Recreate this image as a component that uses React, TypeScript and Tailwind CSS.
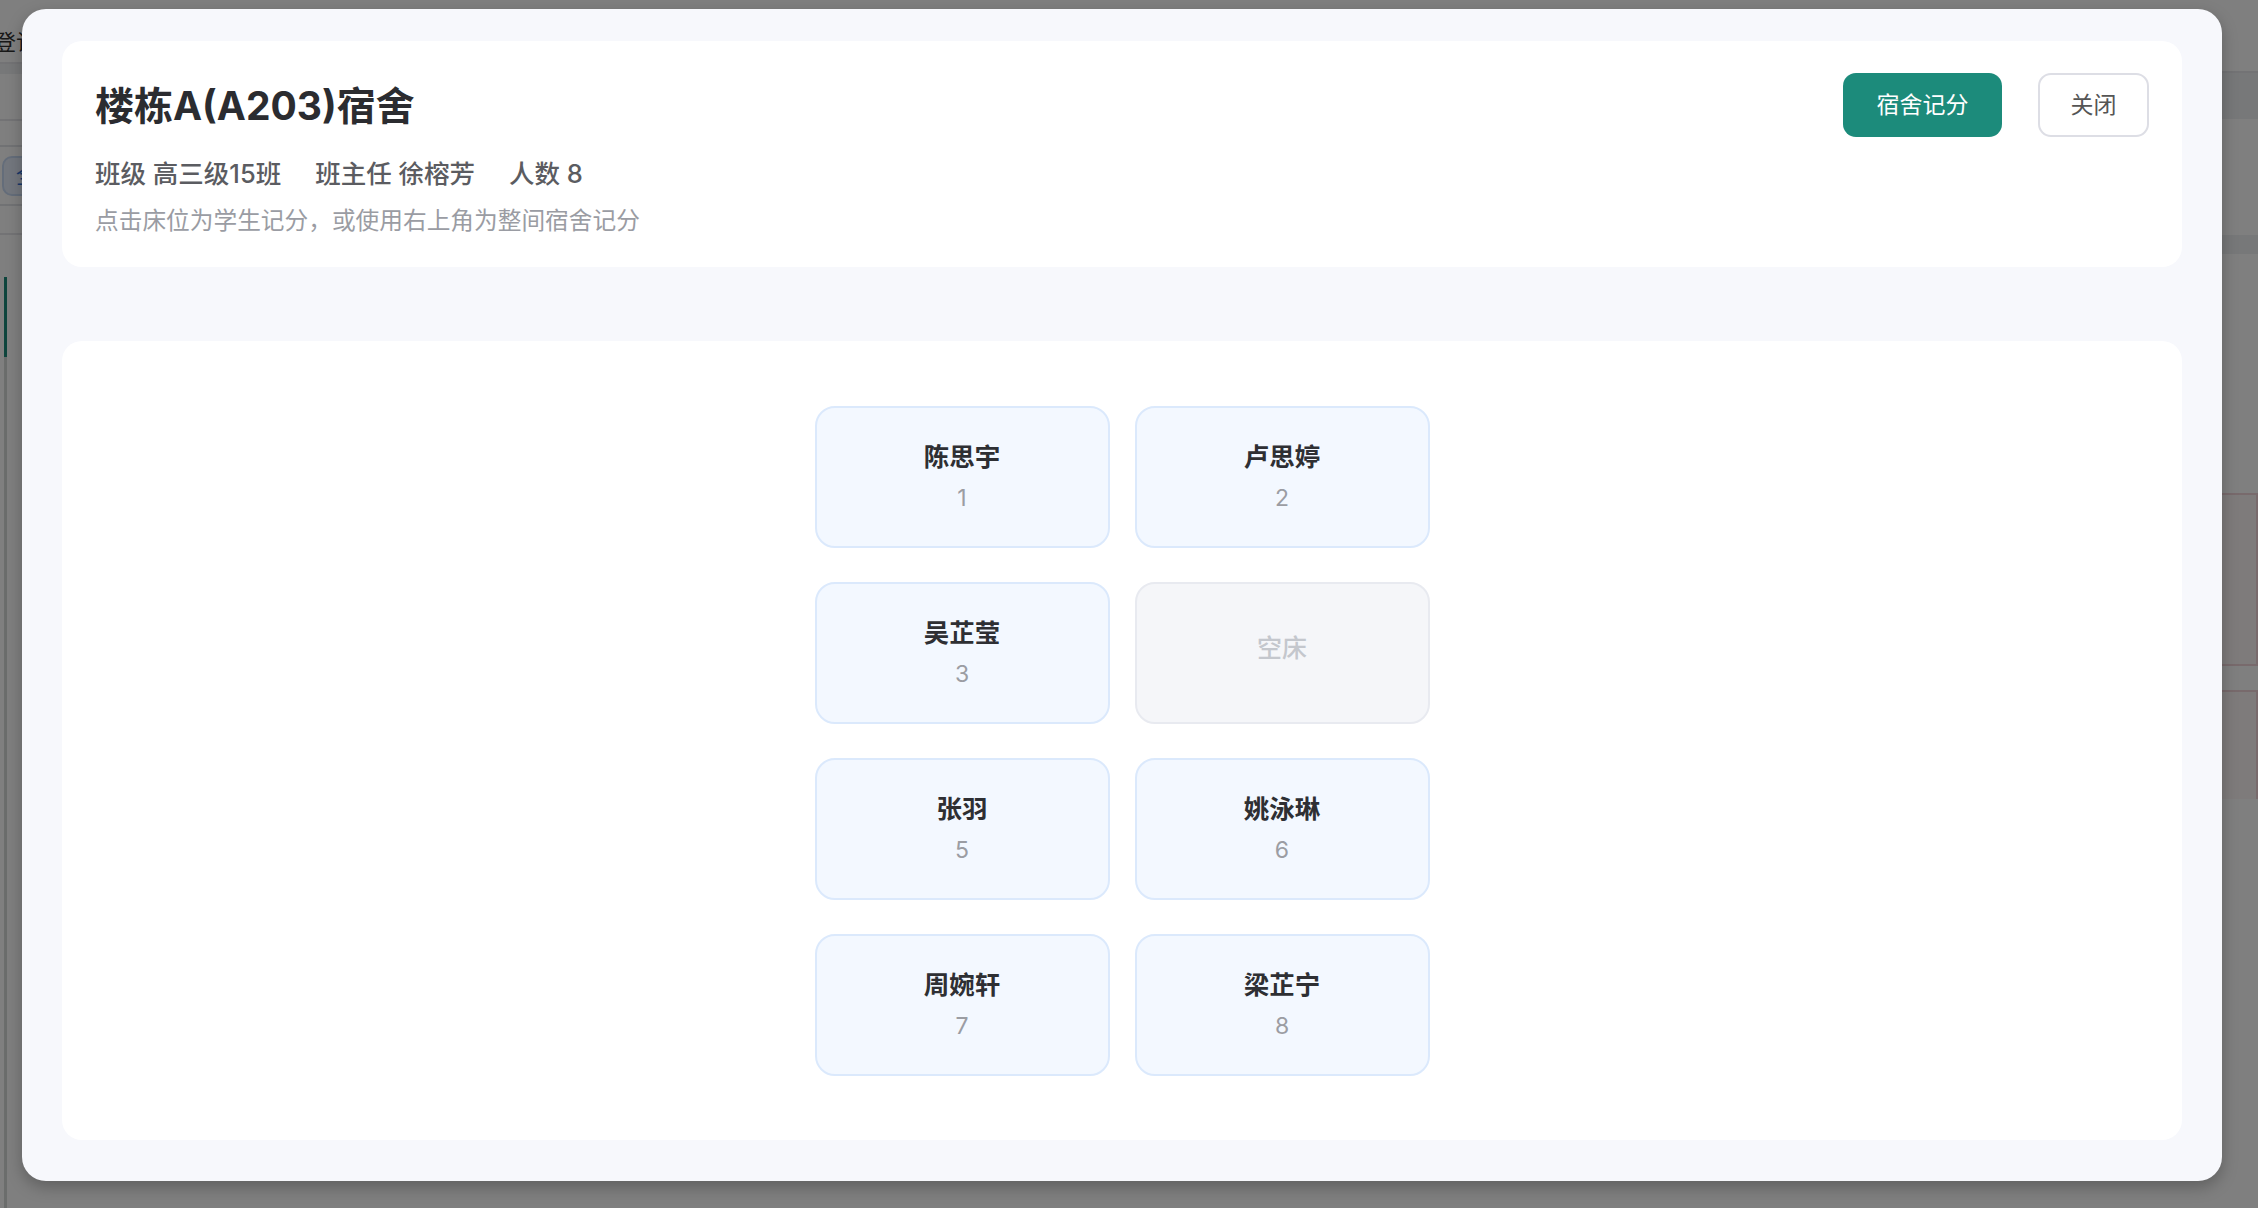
import React from "react";

type Bed = { name?: string; no: number };

const beds: Bed[] = [
  { name: "陈思宇", no: 1 },
  { name: "卢思婷", no: 2 },
  { name: "吴芷莹", no: 3 },
  { no: 4 },
  { name: "张羽", no: 5 },
  { name: "姚泳琳", no: 6 },
  { name: "周婉轩", no: 7 },
  { name: "梁芷宁", no: 8 },
];

function BedCard({ bed }: { bed: Bed }) {
  if (!bed.name) {
    return (
      <div className="w-[295px] h-[142px] rounded-[20px] border-2 border-[#e8eaf0] bg-[#f5f6f9] flex items-center justify-center pb-[10px]">
        <span className="text-[25px] leading-[34px] font-medium text-[#c4c7cd]">空床</span>
      </div>
    );
  }
  return (
    <div className="w-[295px] h-[142px] rounded-[20px] border-2 border-[#dbe9fc] bg-[#f3f8ff] flex flex-col items-center justify-center">
      <span className="text-[25.5px] leading-[34px] font-bold text-[#2e2f33]">{bed.name}</span>
      <span className="mt-[9px] text-[23px] leading-[30px] font-normal text-[#9b9da3]">{bed.no}</span>
    </div>
  );
}

export default function App() {
  return (
    <div className="relative w-[2258px] h-[1208px] overflow-hidden bg-white font-[Inter,'Noto_Sans_CJK_SC',sans-serif]">
      {/* background page */}
      <div className="flex h-full">
        <div className="w-[400px] flex flex-col">
          <div className="h-[64px] border-b-2 border-[#e6e7ea] pt-[27px]">
            <span className="block ml-[-6px] text-[22px] leading-[30px] text-[#333]">登记</span>
          </div>
          <div className="h-[10px] bg-[#eef0f2]" />
          <div className="h-[47px] border-b-2 border-[#e6e7ea]" />
          <div className="mt-[24px] ml-[-10px] h-[61px] border-2 border-[#e3e5e8] rounded-[10px] flex items-center px-[10px]">
            <div className="h-[40px] px-[12px] rounded-[10px] bg-[#e6effc] border-2 border-[#c9daf4] flex items-center text-[22px] text-[#2f6fd6]">全部</div>
          </div>
          <div className="mt-[27px] border-b-2 border-[#e6e7ea]" />
          <div className="flex-1 flex pt-[42px]">
            <div className="ml-[4px] w-[3px] flex flex-col">
              <div className="h-[80px] bg-[#1c8b7b]" />
              <div className="flex-1 bg-[#d6dbd9]" />
            </div>
          </div>
        </div>
        <div className="flex-1 flex flex-col items-end">
          <div className="w-full h-[73px] border-b-2 border-[#e6e7ea]" />
          <div className="w-full h-[46px] bg-[#eef0f2]" />
          <div className="w-full h-[116px]" />
          <div className="w-full h-[19px] bg-[#eef0f2]" />
          <div className="h-[239px]" />
          <div className="w-[300px] h-[173px] border-2 border-[#f1d5d9] bg-[#fdf6f7] flex flex-col justify-center pl-[60px]">
            <span className="text-[36px] font-bold text-[#222] leading-[40px]">A203</span>
            <span className="mt-[10px] text-[22px] text-[#666]">7人</span>
          </div>
          <div className="mt-[24px] w-[300px] h-[109px] overflow-hidden border-t-2 border-x-2 border-[#f1d5d9] bg-[#fdf6f7] flex flex-col pt-[36px] pl-[78px]">
            <span className="text-[36px] font-bold text-[#222] leading-[40px]">204</span>
            <span className="mt-[10px] text-[22px] text-[#666]">0人</span>
          </div>
        </div>
      </div>

      {/* overlay */}
      <div className="absolute inset-0 bg-black/50" />

      {/* modal */}
      <div className="absolute left-[22px] top-[9px] w-[2200px] h-[1172px] rounded-[24px] bg-[#f7f8fc] shadow-[0_6px_16px_rgba(0,0,0,0.25)] flex flex-col pl-[40px] pr-[40px] pt-[32px] pb-[41px]">
        <div className="h-[226px] rounded-[20px] bg-white flex items-start justify-between px-[33px] pt-[32px]">
          <div className="flex flex-col">
            <div className="mt-[5px] text-[39px] leading-[56px] font-bold text-[#2b2c30]">楼栋A(A203)宿舍</div>
            <div className="mt-[22px] flex gap-[34px] text-[25.5px] leading-[36px] font-medium text-[#5b5c61]">
              <span>班级 高三级15班</span>
              <span>班主任 徐榕芳</span>
              <span>人数 8</span>
            </div>
            <div className="mt-[12px] text-[23.7px] leading-[34px] text-[#9a9ca3]">点击床位为学生记分，或使用右上角为整间宿舍记分</div>
          </div>
          <div className="flex items-center gap-[36px]">
            <button className="w-[159px] h-[64px] rounded-[13px] bg-[#1c8b7b] text-white text-[23px]">宿舍记分</button>
            <button className="w-[111px] h-[64px] rounded-[13px] bg-white border-2 border-[#dddee5] text-[#555] text-[23px]">关闭</button>
          </div>
        </div>
        <div className="mt-[74px] flex-1 rounded-[20px] bg-white flex items-center justify-center">
          <div className="grid grid-cols-[295px_295px] gap-x-[25px] gap-y-[34px]">
            {beds.map((b) => (
              <BedCard key={b.no} bed={b} />
            ))}
          </div>
        </div>
      </div>
    </div>
  );
}
